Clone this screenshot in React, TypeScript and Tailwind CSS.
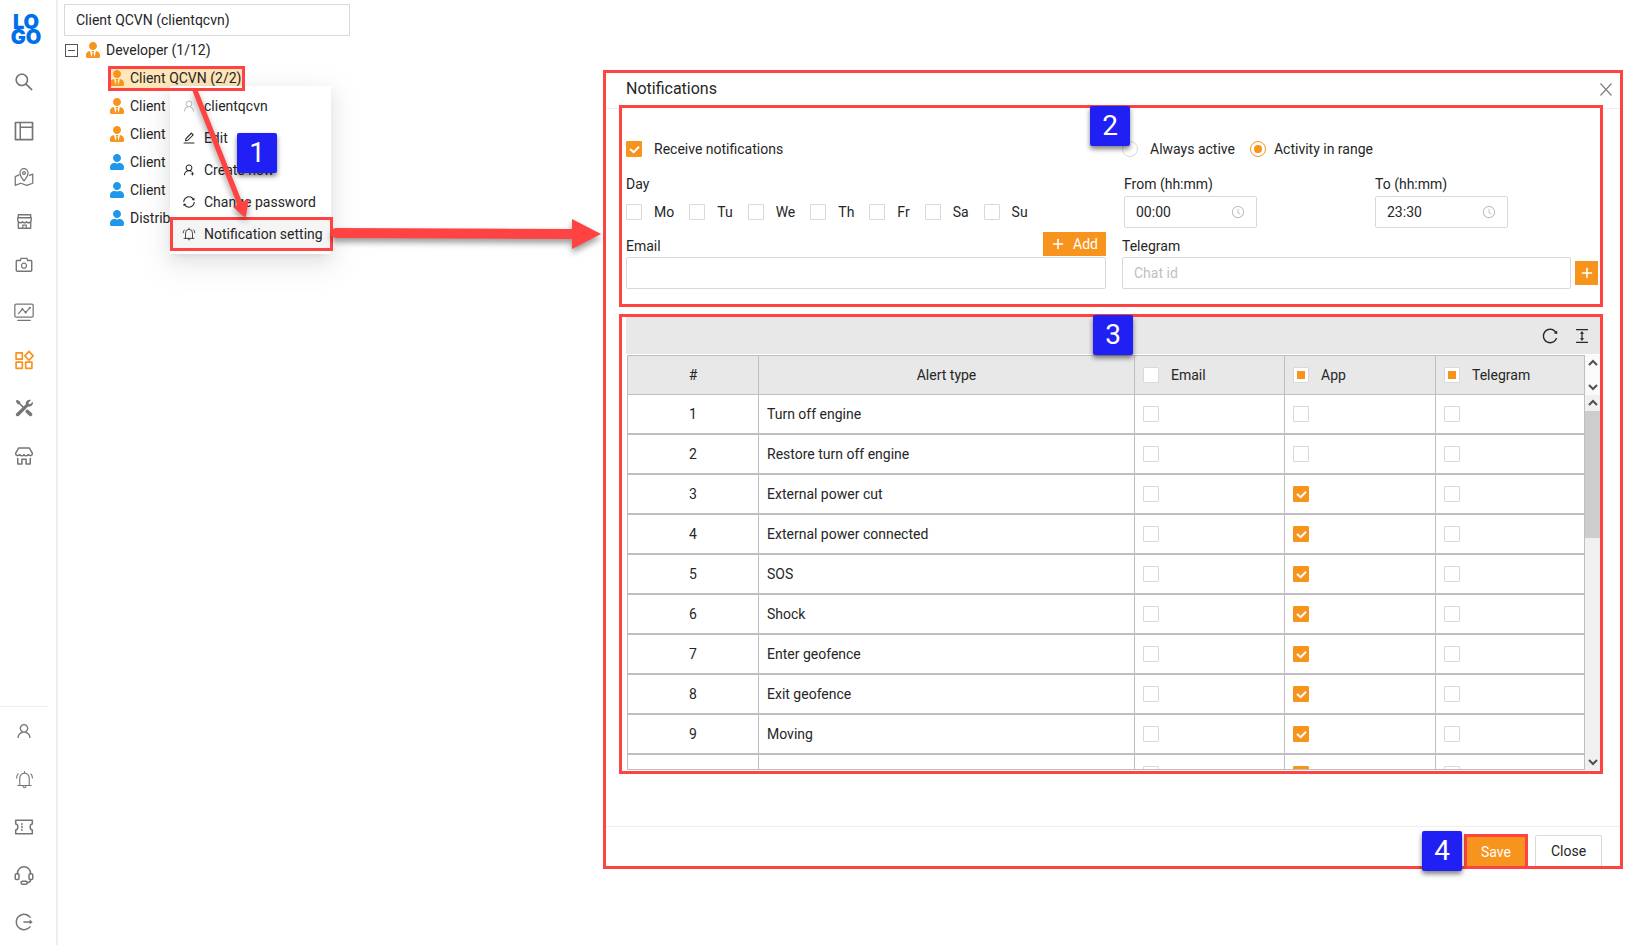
import { useEffect, useRef } from "react";
import type { ReactNode } from "react";
import {
  AiOutlineCamera,
  AiOutlineClockCircle,
  AiOutlineColumnHeight,
  AiOutlineEdit,
  AiOutlineLayout,
  AiOutlineLogout,
  AiOutlinePlus,
  AiOutlineReload,
  AiOutlineSearch,
  AiOutlineShop,
  AiOutlineSync,
  AiOutlineUser,
  AiOutlineUserAdd,
} from "react-icons/ai";
import { FaUser, FaUserTie } from "react-icons/fa";

function Glyph({ size, width = 1.5, children }: { size: number; width?: number; children: ReactNode }) {
  return (
    <svg
      width={size}
      height={size}
      viewBox="0 0 24 24"
      fill="none"
      stroke="currentColor"
      strokeWidth={width}
      strokeLinejoin="round"
      strokeLinecap="round"
      aria-hidden="true"
    >
      {children}
    </svg>
  );
}

const MapIcon = () => (
  <Glyph size={20}>
    <path d="M12 16.5C9 13 7.2 10.400 7.200 7.200a4.800 5.200 0 0 1 9.600 0c0 3.200-1.800 5.800-4.800 9.300Z" />
    <circle cx="12" cy="7.200" r="1.700" />
    <path d="M6 9.500 1.500 11.500V22l6.500-2.500 7.500 2.500 7-2.500V8.500L18.500 10" />
  </Glyph>
);

const MonitorIcon = () => (
  <Glyph size={20}>
    <rect x="1" y="2.500" width="22" height="15.500" rx="1.500" />
    <path d="M5.500 14 10 8.500l4 4L19 7M4.500 22h15" />
    <circle cx="10" cy="8.500" r=".6" />
    <circle cx="14" cy="12.500" r=".6" />
    <circle cx="19" cy="7" r=".6" />
  </Glyph>
);

const AppsIcon = () => (
  <Glyph size={20} width={2}>
    <rect x="2.500" y="3.500" width="7.500" height="7.500" />
    <path d="m18 1.700 5 5.300-5 5.300L13 7Z" />
    <rect x="2.500" y="14.500" width="7.500" height="7.500" />
    <rect x="14" y="14.500" width="7.500" height="7.500" />
  </Glyph>
);

const ToolsIcon = () => (
  <svg width="18" height="18" viewBox="0 0 24 24" fill="currentColor" aria-hidden="true">
    <path d="M1 2.800 2.800 1 7 3.500v2L13.500 12 12 13.500 5.500 7h-2Z" />
    <path d="M14 15.500 15.500 14l2 .3 5.300 5c1.500 2-1.500 5-3.500 3.500l-5-5.300Z" />
    <path d="M21.500 1.200 18 4.700l.4 1.900 1.900.4 3.500-3.500c1 4.200-2.300 7.500-6.300 6.500L5 22.500c-2.200 2-5.200-1-3.300-3.300L14.500 7c-1-4 2.800-7 7-5.800Z" />
  </svg>
);

const StoreIcon = () => (
  <Glyph size={20} width={1.8}>
    <path d="M5.500 2.500h13L22 8.500c.6 3-3.200 4-5 1.800-1.400 2-3.800 2-5 0-1.200 2-3.600 2-5 0C5.200 12.500 1.400 11.500 2 8.500Z" />
    <path d="M4.500 15v6.500h5V16h5v5.500h5V15" />
  </Glyph>
);

const BellIcon = ({ size }: { size: number }) => (
  <Glyph size={size} width={1.4}>
    <path d="M12 2v1.500M6 19V10.500a6 6.500 0 0 1 12 0V19M3.500 19.500h17M10 20c0 3 4 3 4 0" />
    <path d="M4 5C2.800 6.200 2 8 2 10M20 5c1.200 1.200 2 3 2 5" />
  </Glyph>
);

const TicketIcon = () => (
  <Glyph size={20} width={1.8}>
    <path d="M2 4h20v4.500c-3.500 0-3.500 7 0 7V20H2v-4.500c3.500 0 3.500-7 0-7Z" />
    <path d="M9.500 8v1M9.500 11.500v1M9.500 15v1" />
  </Glyph>
);

const HeadsetIcon = () => (
  <Glyph size={20} width={1.8}>
    <path d="M4 10.500C4 5.500 7.500 2 12 2s8 3.500 8 8.500" />
    <rect x="1.500" y="10.500" width="4.500" height="7" rx="1.500" />
    <rect x="18" y="10.500" width="4.500" height="7" rx="1.500" />
    <path d="M20 17.500c0 2-1.500 3.500-4 3.800" />
    <rect x="8.500" y="19.500" width="7.500" height="3.500" rx="1.700" />
  </Glyph>
);

const navTop: { label: string; icon: ReactNode; cls: string }[] = [
  { label: "Search", icon: <AiOutlineSearch size={22} />, cls: "h-[50px]" },
  { label: "Layout", icon: <AiOutlineLayout size={24} />, cls: "h-12" },
  { label: "Map", icon: <MapIcon />, cls: "h-11" },
  { label: "Shop", icon: <AiOutlineShop size={19} />, cls: "h-11" },
  { label: "Camera", icon: <AiOutlineCamera size={20} />, cls: "h-11" },
  { label: "Reports", icon: <MonitorIcon />, cls: "h-[49px]" },
  { label: "Management", icon: <AppsIcon />, cls: "h-12 text-[#f7941d]" },
  { label: "Tools", icon: <ToolsIcon />, cls: "h-12" },
  { label: "Store", icon: <StoreIcon />, cls: "h-12" },
];

const navBottom: { label: string; icon: ReactNode; cls: string }[] = [
  { label: "Account", icon: <AiOutlineUser size={18} />, cls: "h-12" },
  { label: "Alerts", icon: <BellIcon size={19} />, cls: "h-12" },
  { label: "Tickets", icon: <TicketIcon />, cls: "h-12" },
  { label: "Support", icon: <HeadsetIcon />, cls: "h-12" },
  { label: "Log out", icon: <AiOutlineLogout size={20} />, cls: "h-[46px]" },
];

function Sidebar() {
  return (
    <nav className="flex min-h-screen w-[58px] shrink-0 flex-col border-r-2 border-[#eeeeee] pr-2 text-[#757575]">
      <a
        href="#home"
        className="flex h-[57px] flex-col items-center pt-[15px] pl-1 font-[Inter,sans-serif] text-[20px] leading-[15px] font-black text-[#0070e8]"
      >
        <span>LO</span>
        <span>GO</span>
      </a>
      {navTop.map((n) => (
        <button key={n.label} aria-label={n.label} className={`flex items-center justify-center ${n.cls}`}>
          {n.icon}
        </button>
      ))}
      <div className="mt-auto flex flex-col border-t border-[#eeeeee]">
        {navBottom.map((n) => (
          <button key={n.label} aria-label={n.label} className={`flex items-center justify-center ${n.cls}`}>
            {n.icon}
          </button>
        ))}
      </div>
    </nav>
  );
}

const nodes = [
  { text: "Client QCVN (2/2)", distributor: true },
  { text: "Client", distributor: true },
  { text: "Client", distributor: true },
  { text: "Client", distributor: false },
  { text: "Client", distributor: false },
  { text: "Distributor", distributor: false },
];

const menu: { text: string; icon: ReactNode }[] = [
  { text: "clientqcvn", icon: <AiOutlineUser size={14} className="text-[#bfbfbf]" /> },
  { text: "Edit", icon: <AiOutlineEdit size={14} /> },
  { text: "Create new", icon: <AiOutlineUserAdd size={14} /> },
  { text: "Change password", icon: <AiOutlineSync size={14} /> },
  { text: "Notification setting", icon: <BellIcon size={14} /> },
];

function TreePanel() {
  return (
    <section className="w-[545px] shrink-0 pt-1 pl-[6px]">
      <input
        aria-label="Client"
        defaultValue="Client QCVN (clientqcvn)"
        className="block h-8 w-[286px] border border-[#d9d9d9] px-[11px]"
      />
      <ul>
        <li>
          <div className="flex h-7 items-center">
            <button
              aria-label="Collapse"
              className="mx-px flex size-[13px] items-center justify-center border border-[#555555]"
            >
              <span className="h-px w-[7px] bg-[#555555]" />
            </button>
            <FaUserTie size={16} className="ml-[6px] text-[#f7941d]" />
            <span className="ml-[5px]">Developer (1/12)</span>
          </div>
          <ul className="pl-[46px]">
            {nodes.map((n, i) => (
              <li key={i} className="flex h-7 items-center">
                <span className={`flex h-6 items-center pr-px ${i === 0 ? "bg-[#ffe7ba]" : ""}`}>
                  {n.distributor ? (
                    <FaUserTie size={16} className="-ml-px text-[#f7941d]" />
                  ) : (
                    <FaUser size={16} className="-ml-px text-[#1f97ea]" />
                  )}
                  <span className="ml-[5px]">{n.text}</span>
                </span>
              </li>
            ))}
          </ul>
        </li>
      </ul>
    </section>
  );
}

function ContextMenu() {
  return (
    <ul
      role="menu"
      className="absolute top-[86px] left-[170px] w-[161px] bg-white py-1 shadow-[0_3px_6px_-4px_rgba(0,0,0,0.12),0_6px_16px_0_rgba(0,0,0,0.08),0_9px_28px_8px_rgba(0,0,0,0.05)]"
    >
      {menu.map((m, i) => (
        <li key={m.text} role="none">
          <button
            role="menuitem"
            className={`flex h-8 w-full items-center gap-2 pl-3 text-left whitespace-nowrap ${i === 4 ? "bg-[#f5f5f5]" : ""}`}
          >
            {m.icon}
            {m.text}
          </button>
        </li>
      ))}
    </ul>
  );
}

function Callout({ n, place }: { n: number; place: string }) {
  return (
    <div
      className={`absolute z-10 flex size-10 items-center justify-center rounded-[2px] bg-[#2020f5] text-[28px] text-white shadow-[0_3px_5px_rgba(0,0,0,0.5)] ${place}`}
    >
      {n}
    </div>
  );
}

function Check({ label, checked, mixed }: { label: string; checked?: boolean; mixed?: boolean }) {
  const ref = useRef<HTMLInputElement>(null);
  useEffect(() => {
    if (ref.current) ref.current.indeterminate = !!mixed;
  }, [mixed]);
  return (
    <span className="grid size-4 shrink-0 place-items-center">
      <input
        ref={ref}
        type="checkbox"
        aria-label={label}
        defaultChecked={checked}
        className="peer col-start-1 row-start-1 size-4 appearance-none rounded-[1px] border border-[#d9d9d9] bg-white checked:border-[#f7941d] checked:bg-[#f7941d]"
      />
      <svg
        viewBox="0 0 16 16"
        className="pointer-events-none col-start-1 row-start-1 hidden size-4 peer-checked:block"
        fill="none"
        stroke="white"
        strokeWidth="2"
      >
        <path d="m4 8 3.700 3.200L13 5.800" />
      </svg>
      <span className="pointer-events-none col-start-1 row-start-1 hidden size-2 bg-[#f7941d] peer-indeterminate:block" />
    </span>
  );
}

function Radio({ label, checked }: { label: string; checked?: boolean }) {
  return (
    <label className="flex items-center">
      <span className="grid size-4 place-items-center">
        <input
          type="radio"
          name="activity"
          defaultChecked={checked}
          className="peer col-start-1 row-start-1 size-4 appearance-none rounded-full border border-[#d9d9d9] bg-white checked:border-[#f7941d]"
        />
        <span className="pointer-events-none col-start-1 row-start-1 hidden size-2 rounded-full bg-[#f7941d] peer-checked:block" />
      </span>
      <span className={checked ? "pl-2" : "pl-3"}>{label}</span>
    </label>
  );
}

function TimeField({ id, label, value }: { id: string; label: string; value: string }) {
  return (
    <div>
      <label htmlFor={id} className="block h-[23px]">
        {label}
      </label>
      <div className="flex h-8 w-[133px] items-center rounded-[2px] border border-[#d9d9d9] px-[11px]">
        <input id={id} defaultValue={value} className="w-full min-w-0 outline-none" />
        <AiOutlineClockCircle size={14} className="shrink-0 text-[#bfbfbf]" />
      </div>
    </div>
  );
}

const days = ["Mo", "Tu", "We", "Th", "Fr", "Sa", "Su"];

function Settings() {
  return (
    <section className="relative -mt-1 border-[3px] border-[#ff4343] bg-white pt-[29px] pb-[15px] pl-1">
      <Callout n={2} place="-top-[2px] right-[470px]" />
      <div className="-mr-[2px] grid grid-cols-2 gap-x-4">
        <div>
          <label className="mb-3 flex h-6 items-center gap-3">
            <Check label="Receive notifications" checked />
            Receive notifications
          </label>
          <div className="h-[23px]">Day</div>
          <div className="flex h-8 items-center gap-[15px]">
            {days.map((d) => (
              <label key={d} className="flex items-center gap-3">
                <Check label={d} />
                {d}
              </label>
            ))}
          </div>
          <div className="mt-1 flex h-[25px] items-start justify-between">
            <label htmlFor="email" className="pt-[3px]">
              Email
            </label>
            <button className="flex h-6 items-center gap-2 bg-[#f7941d] px-2 text-white">
              <AiOutlinePlus size={14} strokeWidth={40} />
              Add
            </button>
          </div>
          <input id="email" className="block h-8 w-full rounded-[2px] border border-[#d9d9d9] px-[11px]" />
        </div>
        <div className="pr-1">
          <div className="mb-3 flex h-6 items-center gap-[15px]">
            <Radio label="Always active" />
            <Radio label="Activity in range" checked />
          </div>
          <div className="grid grid-cols-[251px_1fr] pl-[2px]">
            <TimeField id="from" label="From (hh:mm)" value="00:00" />
            <TimeField id="to" label="To (hh:mm)" value="23:30" />
          </div>
          <label htmlFor="telegram" className="mt-1 block h-[25px] pt-[3px]">
            Telegram
          </label>
          <div className="flex items-center gap-1">
            <input
              id="telegram"
              placeholder="Chat id"
              className="h-8 min-w-0 flex-1 rounded-[2px] border border-[#d9d9d9] px-[11px] placeholder:text-[#bfbfbf]"
            />
            <button
              aria-label="Add chat id"
              className="flex h-6 w-[23px] items-center justify-center bg-[#f7941d] text-white"
            >
              <AiOutlinePlus size={14} strokeWidth={40} />
            </button>
          </div>
        </div>
      </div>
    </section>
  );
}

const alerts = [
  { name: "Turn off engine", app: false },
  { name: "Restore turn off engine", app: false },
  { name: "External power cut", app: true },
  { name: "External power connected", app: true },
  { name: "SOS", app: true },
  { name: "Shock", app: true },
  { name: "Enter geofence", app: true },
  { name: "Exit geofence", app: true },
  { name: "Moving", app: true },
  { name: "", app: true },
];

function Chevron({ down }: { down?: boolean }) {
  return (
    <svg
      width="15"
      height="16"
      viewBox="0 0 15 16"
      fill="none"
      stroke="#505050"
      strokeWidth="2"
      aria-hidden="true"
    >
      <path d={down ? "m4 6 4 4 4-4" : "m4 10 4-4 4 4"} />
    </svg>
  );
}

function AlertTable() {
  const head = "h-10 border-y border-r border-[#bfbfbf] bg-[#e8e8e8] p-0 font-normal";
  const cell = "h-10 border-r border-b-2 border-[#bfbfbf] p-0";
  return (
    <section className="relative mt-[7px] border-[3px] border-[#ff4343] bg-white pb-px pl-1">
      <Callout n={3} place="-top-[2px] right-[467px]" />
      <div className="flex h-[37px] items-center justify-end gap-[14px] bg-[#e8e8e8] pr-[9px]">
        <button aria-label="Reload">
          <AiOutlineReload size={18} />
        </button>
        <button aria-label="Row height">
          <AiOutlineColumnHeight size={18} />
        </button>
      </div>
      <div className="mt-px ml-px flex h-[415px]">
        <div className="min-w-0 flex-1 overflow-hidden border-b border-l border-[#bfbfbf]">
          <table className="w-full table-fixed border-separate border-spacing-0">
            <colgroup>
              <col className="w-[131px]" />
              <col />
              <col className="w-[150px]" />
              <col className="w-[151px]" />
              <col className="w-[149px]" />
            </colgroup>
            <thead>
              <tr>
                <th className={head}>#</th>
                <th className={head}>Alert type</th>
                {["Email", "App", "Telegram"].map((t) => (
                  <th key={t} className={head}>
                    <label className="flex items-center gap-3 pl-2">
                      <Check label={`All ${t}`} mixed={t !== "Email"} />
                      {t}
                    </label>
                  </th>
                ))}
              </tr>
            </thead>
            <tbody>
              {alerts.map((a, i) => (
                <tr key={i}>
                  <td className={`${cell} text-center`}>{i < 9 ? i + 1 : ""}</td>
                  <td className={`${cell} pl-2`}>{a.name}</td>
                  <td className={cell}>
                    <div className="pl-2">
                      <Check label={`Email alert ${i + 1}`} />
                    </div>
                  </td>
                  <td className={cell}>
                    <div className="pl-2">
                      <Check label={`App alert ${i + 1}`} checked={a.app} />
                    </div>
                  </td>
                  <td className={cell}>
                    <div className="pl-2">
                      <Check label={`Telegram alert ${i + 1}`} />
                    </div>
                  </td>
                </tr>
              ))}
            </tbody>
          </table>
        </div>
        <div className="flex w-[15px] flex-col bg-[#f0f0f0]">
          <div className="flex h-10 flex-col justify-between bg-[#fafafa]">
            <Chevron />
            <Chevron down />
          </div>
          <Chevron />
          <div className="h-[127px] bg-[#cdcdcd]" />
          <div className="mt-auto">
            <Chevron down />
          </div>
        </div>
      </div>
    </section>
  );
}

function Dialog() {
  return (
    <main
      role="dialog"
      aria-label="Notifications"
      className="relative mt-[70px] mr-[2px] min-w-0 flex-1 self-start border-[3px] border-[#ff4343] bg-white"
    >
      <header className="flex h-9 items-center justify-between border-b border-[#eeeeee] pr-2 pb-[3px] pl-5">
        <h1 className="text-base">Notifications</h1>
        <button aria-label="Close dialog" className="text-[#808080]">
          <svg width="12" height="13" viewBox="0 0 12 13" stroke="currentColor" strokeWidth="1.200" aria-hidden="true">
            <path d="m.5.5 11 12M11.500.5l-11 12" />
          </svg>
        </button>
      </header>
      <div className="pr-[17px] pb-[52px] pl-[13px]">
        <Settings />
        <AlertTable />
      </div>
      <footer className="flex h-10 items-start justify-end gap-[7px] border-t border-[#eeeeee] pt-[7px] pr-[18px]">
        <Callout n={4} place="-bottom-[5px] right-[158px]" />
        <button className="h-[35px] w-16 border-[3px] border-[#ff4343] bg-[#f7941d] text-white">Save</button>
        <button className="mt-px h-[31px] w-[67px] rounded-t-[2px] border border-b-0 border-[#d9d9d9]">Close</button>
      </footer>
    </main>
  );
}

function Annotations() {
  return (
    <>
      <div className="absolute top-[66px] left-[108px] h-[25px] w-[137px] border-[3px] border-[#ff4343]" />
      <div className="absolute top-[217px] left-[170px] h-[34px] w-[163px] border-[3px] border-[#ff4343]" />
      <svg
        className="pointer-events-none absolute top-0 left-0 drop-shadow-[0_4px_3px_rgba(0,0,0,0.4)]"
        width="603"
        height="260"
        viewBox="0 0 603 260"
        fill="#ff4343"
        aria-hidden="true"
      >
        <path d="M192.500 91h5.500l44 111 7-3-3.500 19L233 207l4.500-2Z" />
        <path d="M336 228 572 229V219l29 15-29 15V239L336 238a5 5 0 0 1 0-10Z" />
      </svg>
      <Callout n={1} place="top-[133px] left-[237px]" />
    </>
  );
}

export default function App() {
  return (
    <div className="relative flex min-h-screen bg-white font-[Roboto,sans-serif] text-[14px] leading-[22px] text-[#262626]">
      <Sidebar />
      <TreePanel />
      <Dialog />
      <ContextMenu />
      <Annotations />
    </div>
  );
}
